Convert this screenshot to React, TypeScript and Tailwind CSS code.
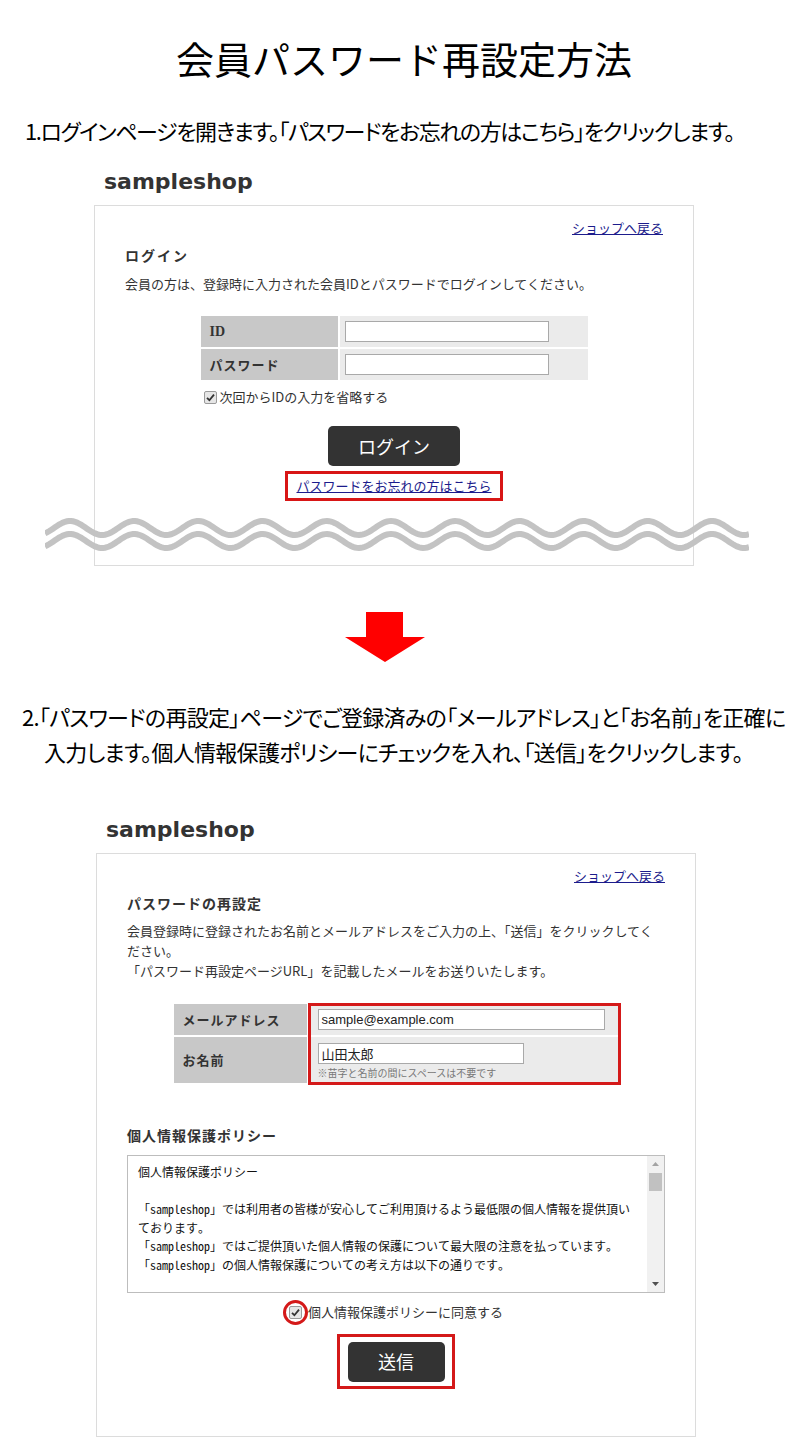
import React from "react";

function Wave() {
  const W = 704;
  const P = 64.2;
  const A = 7;
  const c0 = 25;
  const pts = (off: number) => {
    const arr: string[] = [];
    for (let x = 0; x <= W; x += 2) {
      const y = off - A * Math.cos((2 * Math.PI * (x - c0)) / P);
      arr.push(`${x},${y.toFixed(2)}`);
    }
    return arr.join(" ");
  };
  return (
    <svg width={W} height={36} className="absolute left-[-50px] top-[312px]">
      <polyline points={pts(10)} fill="none" stroke="#c3c3c3" strokeWidth={6} />
      <polyline points={pts(23)} fill="none" stroke="#c3c3c3" strokeWidth={6} />
    </svg>
  );
}

function CheckBox() {
  return (
    <div className="w-[13px] h-[13px] rounded-[2px] border border-[#9a9a9a] bg-[#e6e6e6] flex items-center justify-center shrink-0">
      <svg width="9" height="9" viewBox="0 0 9 9">
        <path d="M1 4.8 L3.4 7.2 L8 1.6" fill="none" stroke="#333" strokeWidth="1.8" />
      </svg>
    </div>
  );
}

function ShopLink() {
  return (
    <div className="text-right leading-[18px]">
      <span className="underline text-[#1c1c8c]">ショップへ戻る</span>
    </div>
  );
}

export default function App() {
  return (
    <div className="w-[800px] min-h-[1453px] bg-white text-black font-['Noto_Sans_CJK_JP',sans-serif]">
      <h1 className="pt-[35px] pl-[8px] text-center text-[38px] leading-[46px] font-normal">
        会員パスワード再設定方法
      </h1>
      <p className="mt-[34px] pl-[25px] text-[22px] leading-[30px] tracking-[-1.4px] whitespace-nowrap [font-feature-settings:'palt']">
        1.ログインページを開きます。「パスワードをお忘れの方はこちら」をクリックします。
      </p>

      {/* Screenshot 1 */}
      <div className="mt-[25px] pl-[104px] text-[22px] leading-[24px] font-bold text-[#333] font-['DejaVu_Sans',sans-serif]">
        sampleshop
      </div>
      <div className="relative mt-[11px] ml-[94px] w-[600px] border border-[#dcdcdc] pt-[13px] px-[30px] pb-[64px] text-[13px] text-[#333]">
        <ShopLink />
        <div className="mt-[9px] font-bold text-[14px] leading-[18px] tracking-[2px]">ログイン</div>
        <p className="mt-[11px] leading-[18px]">
          会員の方は、登録時に入力された会員IDとパスワードでログインしてください。
        </p>
        <div className="mt-[23px] mx-auto w-[387px]">
          <div className="flex gap-[2px] h-[31px]">
            <div className="w-[137px] bg-[#c8c8c8] flex items-center pl-[9px] font-bold font-['Liberation_Serif',serif] text-[14px]">
              ID
            </div>
            <div className="flex-1 bg-[#ebebeb] flex items-center pl-[5px]">
              <div className="w-[204px] h-[21px] bg-white border border-[#a9a9a9]" />
            </div>
          </div>
          <div className="mt-[2px] flex gap-[2px] h-[31px]">
            <div className="w-[137px] bg-[#c8c8c8] flex items-center pl-[9px] font-bold tracking-[1px]">
              パスワード
            </div>
            <div className="flex-1 bg-[#ebebeb] flex items-center pl-[5px]">
              <div className="w-[204px] h-[21px] bg-white border border-[#a9a9a9]" />
            </div>
          </div>
          <div className="mt-[8px] flex items-center gap-[3px] pl-[3px] leading-[18px]">
            <CheckBox />
            <span>次回からIDの入力を省略する</span>
          </div>
        </div>
        <div className="mt-[20px] flex justify-center">
          <div className="w-[132px] h-[40px] rounded-[5px] bg-[#333] text-white text-[18px] flex items-center justify-center">
            ログイン
          </div>
        </div>
        <div className="mt-[5px] flex justify-center">
          <div className="w-[218px] h-[30px] border-[3px] border-[#d81616] flex items-center justify-center">
            <span className="underline text-[#1c1c8c]">パスワードをお忘れの方はこちら</span>
          </div>
        </div>
        <Wave />
      </div>

      {/* Arrow */}
      <div className="mt-[46px] ml-[345px]">
        <svg width="80" height="50" viewBox="0 0 80 50">
          <polygon points="21,0 58,0 58,25 80,25 40,50 0,25 21,25" fill="#ff0000" />
        </svg>
      </div>

      <p className="mt-[37px] pl-[44px] indent-[-22px] text-[22px] leading-[35px] tracking-[-0.7px] whitespace-nowrap [font-feature-settings:'palt']">
        2.「パスワードの再設定」ページでご登録済みの「メールアドレス」と「お名前」を正確に
        <br />
        入力します。個人情報保護ポリシーにチェックを入れ、「送信」をクリックします。
      </p>

      {/* Screenshot 2 */}
      <div className="mt-[49px] pl-[106px] text-[22px] leading-[24px] font-bold text-[#333] font-['DejaVu_Sans',sans-serif]">
        sampleshop
      </div>
      <div className="relative mt-[11px] ml-[96px] w-[600px] border border-[#dcdcdc] pt-[13px] px-[30px] pb-[47px] text-[13px] text-[#333]">
        <ShopLink />
        <div className="mt-[9px] font-bold text-[14px] leading-[18px] tracking-[1px]">パスワードの再設定</div>
        <p className="mt-[9px] leading-[20px]">
          会員登録時に登録されたお名前とメールアドレスをご入力の上、「送信」をクリックしてく
          <br />
          ださい。
          <br />
          「パスワード再設定ページURL」を記載したメールをお送りいたします。
        </p>
        <div className="relative mt-[23px] mx-auto w-[445px]">
          <div className="flex gap-[3px] h-[31px]">
            <div className="w-[133px] bg-[#c8c8c8] flex items-center pl-[9px] font-bold tracking-[1px]">
              メールアドレス
            </div>
            <div className="flex-1 bg-[#ebebeb] flex items-center pl-[8px]">
              <div className="w-[287px] h-[21px] bg-white border border-[#a9a9a9] flex items-center pl-[3px] font-['Liberation_Sans',sans-serif] text-[13px] text-[#222]">
                sample@example.com
              </div>
            </div>
          </div>
          <div className="mt-[2px] flex gap-[3px] h-[46px]">
            <div className="w-[133px] bg-[#c8c8c8] flex items-center pl-[9px] font-bold tracking-[1px]">
              お名前
            </div>
            <div className="flex-1 bg-[#ebebeb] pl-[8px] pt-[6px]">
              <div className="w-[206px] h-[21px] bg-white border border-[#a9a9a9] flex items-center pl-[3px] text-[13px] text-[#222]">
                山田太郎
              </div>
              <div className="mt-[2px] text-[10px] leading-[14px] text-[#777]">※苗字と名前の間にスペースは不要です</div>
            </div>
          </div>
          <div className="absolute left-[134px] top-[-1px] right-[-2px] bottom-[-2px] border-[3px] border-[#d41919]" />
        </div>
        <div className="mt-[43px] font-bold text-[14px] leading-[18px] tracking-[1px]">個人情報保護ポリシー</div>
        <div className="mt-[11px] h-[138px] border border-[#bdbdbd] flex overflow-hidden">
          <div className="flex-1 pl-[10px] pt-[7px] text-[12px] leading-[18.5px] text-[#111] font-['Noto_Sans_Mono_CJK_JP','Noto_Sans_CJK_JP',monospace]">
            個人情報保護ポリシー
            <br />
            <br />
            「sampleshop」では利用者の皆様が安心してご利用頂けるよう最低限の個人情報を提供頂い
            <br />
            ております。
            <br />
            「sampleshop」ではご提供頂いた個人情報の保護について最大限の注意を払っています。
            <br />
            「sampleshop」の個人情報保護についての考え方は以下の通りです。
          </div>
          <div className="w-[17px] bg-[#f1f1f1] flex flex-col items-center">
            <svg width="17" height="17" viewBox="0 0 17 17">
              <polygon points="5,10 12,10 8.5,6" fill="#a3a3a3" />
            </svg>
            <div className="w-[13px] h-[18px] bg-[#c1c1c1]" />
            <div className="flex-1" />
            <svg width="17" height="17" viewBox="0 0 17 17">
              <polygon points="5,7 12,7 8.5,11" fill="#505050" />
            </svg>
          </div>
        </div>
        <div className="mt-[10px] flex justify-center items-center leading-[18px]">
          <div className="relative">
            <CheckBox />
            <div className="absolute left-[-6px] top-[-6px] w-[25px] h-[25px] rounded-full border-[3px] border-[#d41919]" />
          </div>
          <span className="ml-[6px]">個人情報保護ポリシーに同意する</span>
        </div>
        <div className="mt-[13px] flex justify-center">
          <div className="w-[118px] h-[55px] border-[3px] border-[#d41919] flex items-center justify-center">
            <div className="w-[97px] h-[40px] rounded-[5px] bg-[#333] text-white text-[18px] flex items-center justify-center">
              送信
            </div>
          </div>
        </div>
      </div>
    </div>
  );
}
